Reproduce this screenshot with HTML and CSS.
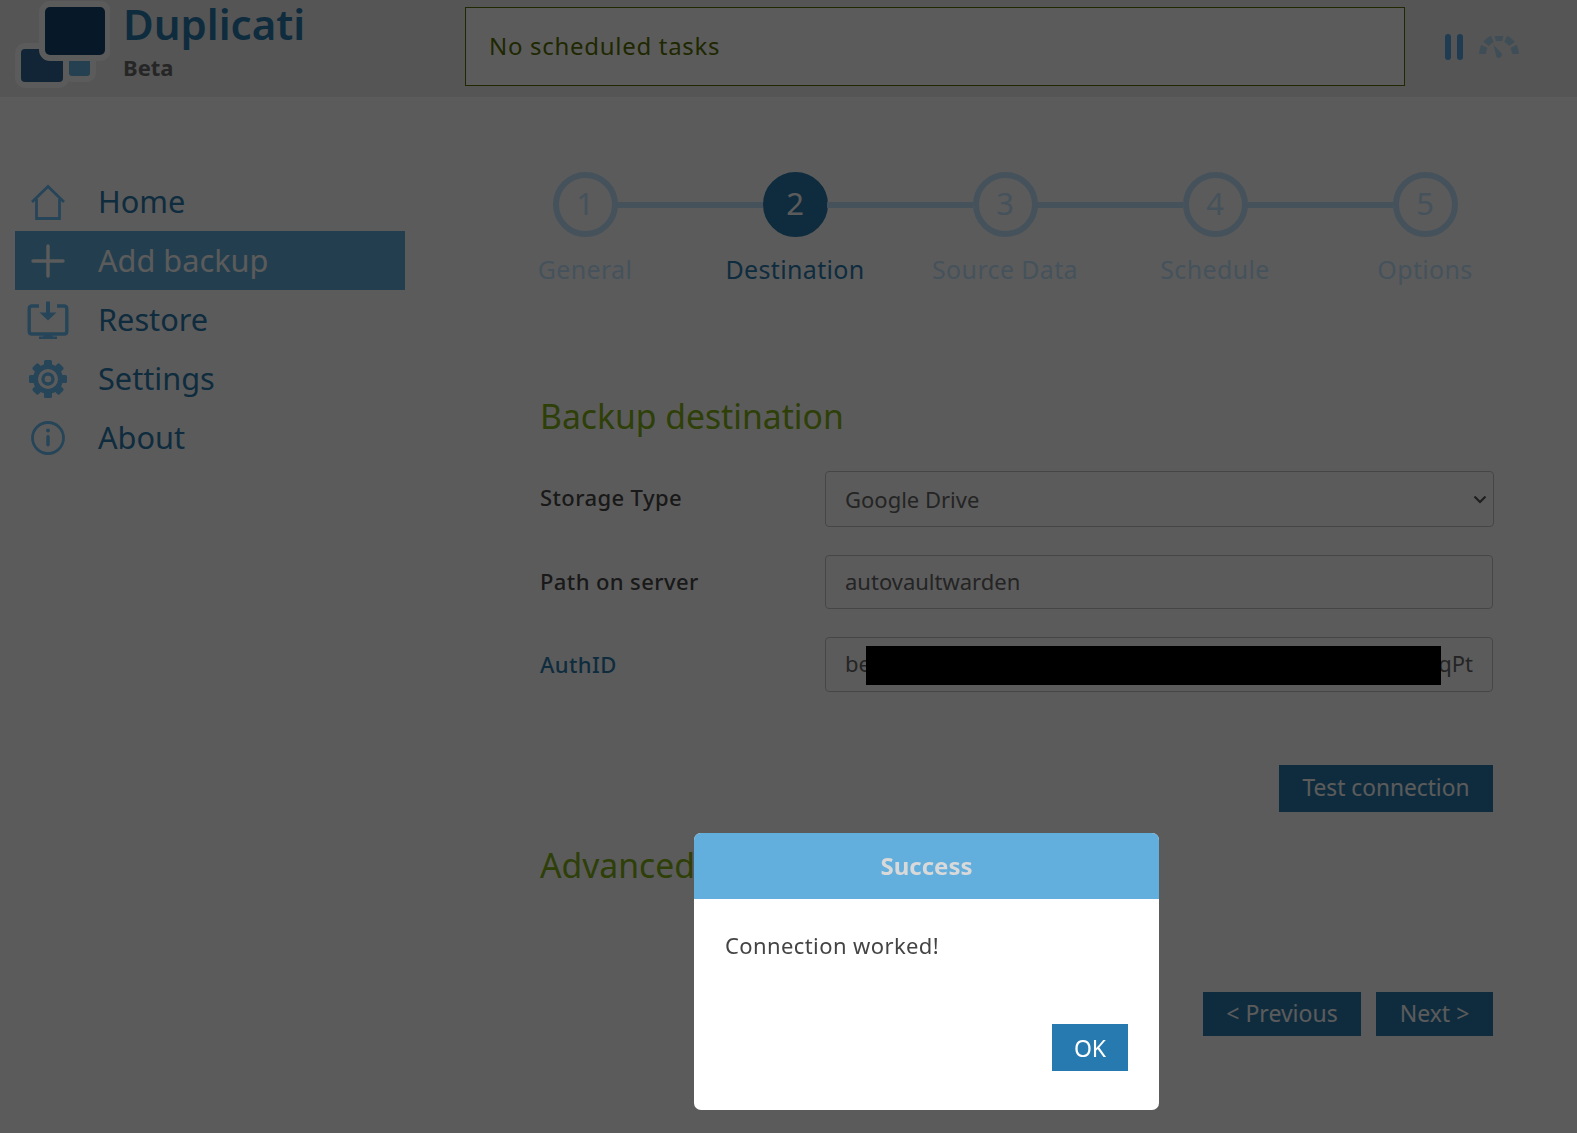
FILE: index.html
```html
<!DOCTYPE html>
<html lang="en">
<head>
<meta charset="utf-8">
<title>Duplicati</title>
<link rel="stylesheet" href="styles.css">
</head>
<body>
<header class="topbar">
  <div class="brand">
    <svg class="logo" width="110" height="97" viewBox="0 0 110 97">
      <rect x="69" y="52" width="21" height="24" rx="3" fill="#68b3e0" stroke="#fff" stroke-width="12" paint-order="stroke"/>
      <rect x="21" y="49" width="42" height="33" rx="4" fill="#32689a" stroke="#fff" stroke-width="12" paint-order="stroke"/>
      <rect x="45" y="7" width="60" height="48" rx="5" fill="#164670" stroke="#fff" stroke-width="12" paint-order="stroke"/>
    </svg>
    <div class="brand-text">
      <div class="brand-name">Duplicati</div>
      <div class="brand-tag">Beta</div>
    </div>
  </div>
  <div class="status">No scheduled tasks</div>
  <div class="controls">
    <svg width="18" height="26" viewBox="0 0 18 26" class="pause">
      <rect x="0" y="0" width="6" height="26" rx="3"/>
      <rect x="12" y="0" width="6" height="26" rx="3"/>
    </svg>
    <svg width="40" height="22" viewBox="-20 -18 40 22" class="gauge">
      <path d="M-16.5 0 A16.5 16.5 0 0 1 16.5 0" pathLength="180" stroke-dasharray="28 10" fill="none" stroke-width="7"/>
      <path class="needle" d="M-5.5 -9 L2.5 -1 A3.3 3.3 0 0 1 -2.4 3.2 Z"/>
    </svg>
  </div>
</header>

<div class="main">
  <nav class="sidebar">
    <a class="nav-item">
      <svg class="nav-icon" width="44" height="44" viewBox="0 0 44 44"><path class="line" d="M6 22 L22 6.500 L38 22 M10.500 19 V38.500 H33.500 V19" stroke-width="2.800"/></svg>
      <span>Home</span>
    </a>
    <a class="nav-item active">
      <svg class="nav-icon" width="44" height="44" viewBox="0 0 44 44"><path class="line plus" d="M22 7 V37 M7 22 H37" stroke-width="3.400" stroke-linecap="round"/></svg>
      <span>Add backup</span>
    </a>
    <a class="nav-item">
      <svg class="nav-icon" width="44" height="44" viewBox="0 0 44 44"><path class="line" d="M13 8 H6 Q3.200 8 3.200 10.800 V33.200 Q3.200 36 6 36 H38 Q40.800 36 40.800 33.200 V10.800 Q40.800 8 38 8 H31" stroke-width="3.400"/><path class="fill" d="M20 3.500 H24 V14.500 H30.500 L22 22.500 L13.500 14.500 H20 Z M18 37 H26 L27 38.500 H31 V41 H13 V38.500 H17 Z"/></svg>
      <span>Restore</span>
    </a>
    <a class="nav-item">
      <svg class="nav-icon" width="44" height="44" viewBox="0 0 44 44"><g class="fill"><rect x="18" y="3" width="8" height="38" rx="1.500"/><rect x="18" y="3" width="8" height="38" rx="1.500" transform="rotate(45 22 22)"/><rect x="18" y="3" width="8" height="38" rx="1.500" transform="rotate(90 22 22)"/><rect x="18" y="3" width="8" height="38" rx="1.500" transform="rotate(135 22 22)"/><circle cx="22" cy="22" r="15"/></g><circle class="gap" cx="22" cy="22" r="10"/><circle class="line" cx="22" cy="22" r="5" stroke-width="3.400"/></svg>
      <span>Settings</span>
    </a>
    <a class="nav-item">
      <svg class="nav-icon" width="44" height="44" viewBox="0 0 44 44"><circle class="line" cx="22" cy="22" r="15.500" stroke-width="2.800"/><circle class="fill" cx="22" cy="14.500" r="2"/><rect class="fill" x="20.300" y="19" width="3.400" height="11.500" rx="1.700"/></svg>
      <span>About</span>
    </a>
  </nav>

  <section class="content">
    <ol class="steps">
      <li class="step"><span class="dot">1</span><span class="step-label">General</span></li>
      <li class="step current"><span class="dot">2</span><span class="step-label">Destination</span></li>
      <li class="step"><span class="dot">3</span><span class="step-label">Source Data</span></li>
      <li class="step"><span class="dot">4</span><span class="step-label">Schedule</span></li>
      <li class="step"><span class="dot">5</span><span class="step-label">Options</span></li>
    </ol>

    <form class="form">
      <h2 class="section-title">Backup destination</h2>
      <div class="row row-select">
        <label class="row-label">Storage Type</label>
        <select class="field select"><option>Google Drive</option></select>
      </div>
      <div class="row row-path">
        <label class="row-label">Path on server</label>
        <input class="field" type="text" value="autovaultwarden">
      </div>
      <div class="row row-auth">
        <label class="row-label link">AuthID</label>
        <div class="field token"><span>be</span><span>qPt</span><i class="redact"></i></div>
      </div>
      <div class="test-row"><button type="button" class="btn test">Test connection</button></div>
      <h2 class="section-title advanced">Advanced options</h2>
      <div class="wizard-nav">
        <button type="button" class="btn nav-btn prev">&lt; Previous</button>
        <button type="button" class="btn nav-btn next">Next &gt;</button>
      </div>
    </form>
  </section>
</div>

<div class="overlay"></div>
<div class="modal">
  <div class="modal-head">Success</div>
  <div class="modal-body">
    <p class="modal-text">Connection worked!</p>
    <div class="modal-actions"><button type="button" class="btn ok">OK</button></div>
  </div>
</div>
</body>
</html>
```

FILE: styles.css
```css
* { box-sizing: border-box; }
html, body { height: 100%; }
html { overflow: hidden; }
body {
  margin: 0;
  background: #fff;
  color: #222;
  font-family: "Noto Sans", "Open Sans", sans-serif;
}

.topbar {
  height: 97px;
  background: #eee;
  display: flex;
  align-items: flex-start;
}
.brand { width: 465px; display: flex; flex: none; }
.logo { flex: none; margin-right: 13px; }
.brand-name {
  font-size: 42px;
  line-height: 48px;
  font-weight: 600;
  color: #2a7bb0;
}
.brand-tag {
  font-size: 22px;
  line-height: 30px;
  margin-top: 4px;
  font-weight: 700;
  color: #6b6b6b;
}
.status {
  width: 940px;
  height: 79px;
  margin-top: 7px;
  border: 1px solid #587000;
  background: #fff;
  color: #587000;
  font-size: 24px;
  letter-spacing: .7px;
  line-height: 75px;
  padding-left: 23px;
  flex: none;
}
.controls { display: flex; margin-left: 40px; margin-top: 34px; gap: 16px; align-items: flex-start; }
.pause { fill: #5aa8e6; flex: none; }
.gauge { stroke: #b0d8f2; flex: none; margin-top: 2px; }
.needle { fill: #b0d8f2; stroke: none; }

.main { display: flex; padding-top: 75px; }
.sidebar { width: 390px; margin-left: 15px; flex: none; display: flex; flex-direction: column; }
.nav-item {
  height: 59px;
  display: flex;
  align-items: center;
  padding-left: 11px;
  font-size: 30.700px;
  color: #2a7bb0;
}
.nav-item span { margin-top: -2px; }
.nav-item.active { background: #62aedc; color: #fff; }
.nav-icon { flex: none; margin-right: 28px; }
.line { fill: none; stroke: #6ac0f8; }
.fill { fill: #6ac0f8; }
.gap { fill: #fff; }
.nav-item.active .plus { stroke: #fff; }

.content { width: 1050px; margin-left: 75px; flex: none; }
.steps {
  list-style: none;
  margin: 0;
  padding: 0;
  display: flex;
}
.step {
  width: 20%;
  display: flex;
  flex-direction: column;
  align-items: center;
  position: relative;
  color: #c1e6ff;
}
.step + .step::before {
  content: "";
  position: absolute;
  left: calc(-50% + 32px);
  right: calc(50% + 32px);
  top: 30px;
  height: 6px;
  background: #c1e6ff;
}
.dot {
  width: 65px;
  height: 65px;
  border-radius: 50%;
  border: 6px solid #c1e6ff;
  background: #fff;
  font-size: 31px;
  line-height: 50px;
  text-align: center;
}
.step-label { font-size: 25px; letter-spacing: .35px; line-height: 34px; margin-top: 15px; white-space: nowrap; }
.current { color: #2a7bb0; }
.current .dot { background: #2a7bb0; border-color: #2a7bb0; color: #fff; }

.form { padding: 0 37px 0 60px; }
.section-title {
  margin: 0;
  font-size: 33.700px;
  line-height: 46px;
  font-weight: 400;
  color: #81b016;
  white-space: nowrap;
}
.form > .section-title:first-child { margin-top: 107px; }
.row { display: flex; align-items: center; }
.row-label { width: 285px; flex: none; font-size: 22px; letter-spacing: .4px; font-weight: 500; color: #484848; padding-bottom: 2px; }
.row-select .row-label { padding-bottom: 4px; }
.row-label.link { color: #2a7bb0; }
.field {
  flex: 1;
  min-width: 0;
  border: 1px solid #c4c4c4;
  border-radius: 4px;
  background: #fff;
  color: #666;
  font-family: inherit;
  font-size: 22px;
  padding: 0 19px;
}
.row-select { margin-top: 32px; }
.select {
  height: 56px;
  margin-right: -1px;
  appearance: none;
  background: #fff url("data:image/svg+xml,%3Csvg xmlns='http://www.w3.org/2000/svg' width='14' height='9' viewBox='0 0 14 9'%3E%3Cpath d='M1.500 1.500 L7 7 L12.500 1.500' fill='none' stroke='%23555' stroke-width='2.200'/%3E%3C/svg%3E") no-repeat right 6px center;
}
.row-path { margin-top: 28px; }
.row-path .field { height: 54px; padding-bottom: 2px; }
.row-auth { margin-top: 28px; }
.token {
  height: 55px;
  display: flex;
  justify-content: space-between;
  align-items: center;
  position: relative;
  padding-bottom: 3px;
}
.redact {
  position: absolute;
  left: 40px;
  width: 575px;
  top: 8px;
  height: 39px;
  background: #000;
}
.btn {
  border: 0;
  background: #2a7bb0;
  color: #fff;
  font-family: inherit;
  font-size: 23px;
  padding: 0 0 2px;
}
.test-row { display: flex; justify-content: flex-end; margin-top: 73px; }
.test { width: 214px; height: 47px; font-size: 22.700px; }
.advanced { margin-top: 30px; }
.wizard-nav { display: flex; justify-content: flex-end; gap: 15px; margin-top: 104px; }
.nav-btn { height: 44px; }
.prev { width: 158px; }
.next { width: 117px; }

.overlay {
  position: fixed;
  inset: 0;
  background: rgba(0, 0, 0, .643);
}
.modal {
  position: fixed;
  left: 694px;
  top: 833px;
  width: 465px;
  height: 277px;
  background: #fff;
  border-radius: 7px;
  overflow: hidden;
}
.modal-head {
  height: 66px;
  background: #62aedc;
  color: #d9d9d9;
  font-size: 24px;
  font-weight: 700;
  line-height: 66px;
  text-align: center;
}
.modal-body { padding: 0 31px; }
.modal-text { margin: 0; padding-top: 30px; font-size: 22px; letter-spacing: .4px; line-height: 32px; color: #444; }
.modal-actions { display: flex; justify-content: flex-end; margin-top: 63px; }
.ok { width: 76px; height: 47px; background: #267ab0; padding: 0; }
```
